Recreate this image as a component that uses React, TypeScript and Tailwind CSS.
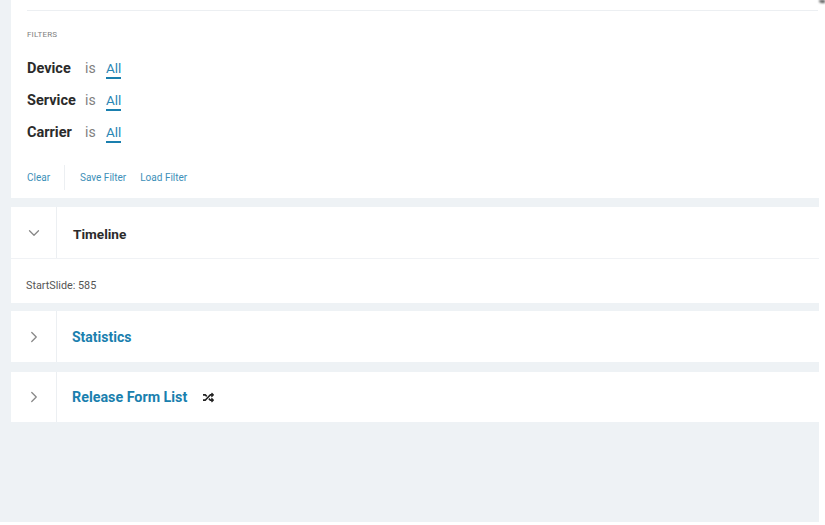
import React from "react";
import { ChevronDown, ChevronRight } from "lucide-react";
import { FaRandom } from "react-icons/fa";

const filters = ["Device", "Service", "Carrier"];

const App: React.FC = () => {
  return (
    <div className="relative h-[525px] w-[825px] overflow-hidden bg-white font-['Roboto','Liberation_Sans',Arial,sans-serif]">
      <div className="absolute right-0 top-0 h-[3px] w-[6px] rounded-bl-full bg-[#555555] blur-[1px]" />
      <div className="h-[522px] w-[819px] bg-[#eef2f5] pl-[11px]">
        {/* Filters */}
        <div className="h-[198px] bg-white pl-4 pr-px">
          <div className="h-[11px] border-b border-[#eceff2]" />
          <div className="pt-[19px] text-[8px] leading-[10px] tracking-[0.2px] text-[#808080]">FILTERS</div>
          <div className="mt-[13px] flex flex-col">
            {filters.map((f) => (
              <div key={f} className="flex h-8 items-center">
                <span className="w-[58px] text-[14.5px] font-bold text-[#2b2b2b]">{f}</span>
                <span className="w-[21px] pb-px text-[14px] text-[#808080]">is</span>
                <span className="border-b-2 border-[#1a7fae] text-[13.5px] leading-[17px] text-[#2a86b4]">All</span>
              </div>
            ))}
          </div>
          <div className="mt-[16px] flex h-[25px] items-center text-[10px] text-[#3d8fb8]">
            <span className="w-[37px]">Clear</span>
            <span className="h-[25px] w-px bg-[#eceff2]" />
            <span className="ml-[15px]">Save Filter</span>
            <span className="ml-[14px]">Load Filter</span>
          </div>
        </div>

        {/* Timeline */}
        <div className="mt-[9px] h-[96px] bg-white">
          <div className="flex h-[52px] items-center border-b border-[#f0f2f5]">
            <div className="flex h-full w-[46px] items-center justify-center border-r border-[#eceff2]">
              <ChevronDown className="h-[18px] w-[18px] text-[#888888]" strokeWidth={1.75} />
            </div>
            <span className="ml-[16px] pt-[3px] text-[13.6px] font-bold text-[#2b2b2b]">Timeline</span>
          </div>
          <div className="pl-[15px] pt-[21px] text-[10.8px] leading-3 text-[#555555]">StartSlide: 585</div>
        </div>

        {/* Statistics */}
        <div className="mt-2 flex h-[51px] items-center bg-white">
          <div className="flex h-full w-[46px] items-center justify-center border-r border-[#eceff2]">
            <ChevronRight className="h-[18px] w-[18px] text-[#888888]" strokeWidth={1.75} />
          </div>
          <span className="ml-[15px] pt-[2px] text-[14px] font-bold text-[#1a7fae]">Statistics</span>
        </div>

        {/* Release Form List */}
        <div className="mt-[10px] flex h-[50px] items-center bg-white">
          <div className="flex h-full w-[46px] items-center justify-center border-r border-[#eceff2]">
            <ChevronRight className="h-[18px] w-[18px] text-[#888888]" strokeWidth={1.75} />
          </div>
          <span className="ml-[15px] pt-px text-[14.3px] font-bold text-[#1a7fae]">Release Form List</span>
          <FaRandom className="ml-[16px] h-[11px] w-[11px] text-[#222222]" />
        </div>
      </div>
    </div>
  );
};

export default App;
